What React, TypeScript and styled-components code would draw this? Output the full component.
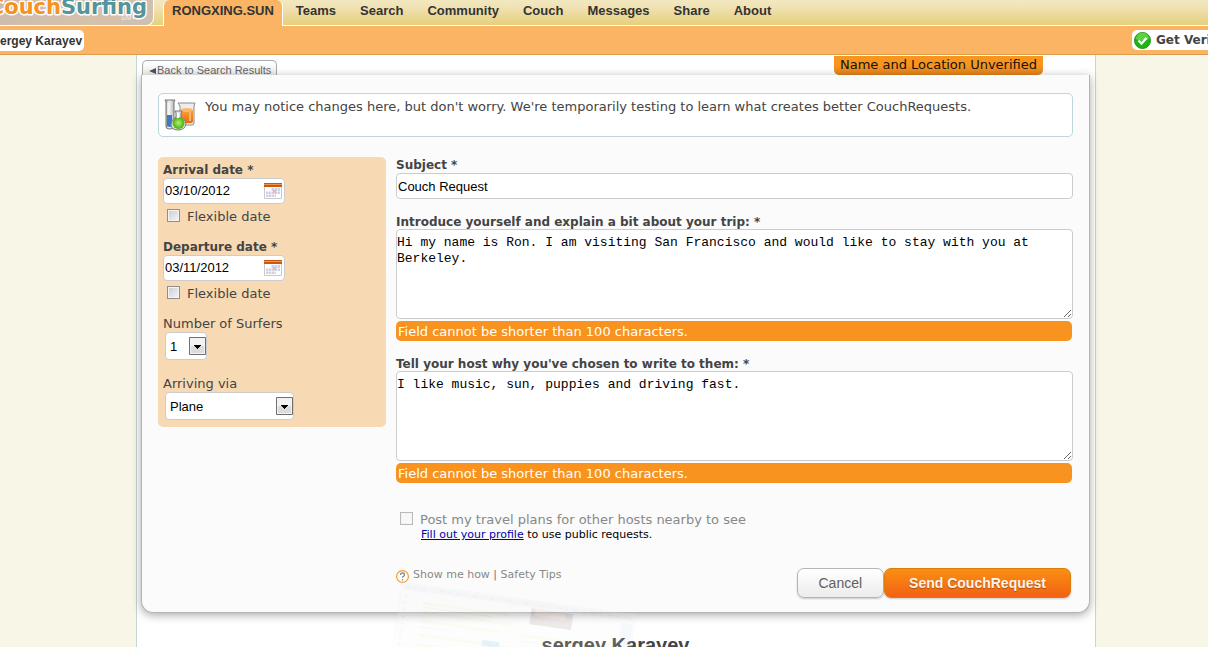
import React from "react";
import styled, { createGlobalStyle, css } from "styled-components";

const verdana = `"DejaVu Sans", Verdana, sans-serif`;
const arial = `"Liberation Sans", Arial, sans-serif`;
const mono = `"Liberation Mono", "Courier New", monospace`;

const GlobalStyle = createGlobalStyle`
  *, *::before, *::after { box-sizing: border-box; }
  body {
    margin: 0;
    background: #f8f6e6;
    color: #444;
    font: 13px/16px ${verdana};
  }
`;

const Page = styled.div`
  display: flex;
  flex-direction: column;
  min-height: 100vh;
  overflow: hidden;
`;

const Header = styled.header`
  display: flex;
  height: 26px;
  background: linear-gradient(#f2e8c0, #f0e2b2 30%, #e6cf7c);
  border-bottom: 1px solid #fff;
`;

const LogoLink = styled.a`
  display: block;
  width: 154px;
  height: 26px;
  margin-right: 9px;
  border: 1px solid #fff;
  border-width: 0 1px 1px 0;
  border-bottom-right-radius: 8px;
  background: linear-gradient(100deg, #cdbcae, #d6c1aa 60%, #cfbfb2);

  svg { display: block; }
`;

const Nav = styled.nav`
  display: flex;
`;

const NavLink = styled.a<{ $active?: boolean }>`
  padding: 3px 12px 0;
  color: #333;
  font: bold 13px/16px ${arial};
  text-decoration: none;
  white-space: nowrap;
  ${(p) =>
    p.$active &&
    css`
      height: 26px;
      margin-right: 1px;
      padding: 3px 8px 0;
      border: 1px solid #fff;
      border-width: 0 1px;
      border-radius: 6px 6px 0 0;
      background: #fab463;
    `}
`;

const SubBar = styled.div`
  display: flex;
  justify-content: space-between;
  height: 29px;
  padding-top: 4px;
  background: #fab463;
  border-bottom: 1px solid #dd9d50;
`;

const PersonChip = styled.a`
  height: 21px;
  padding: 0 2px 0 0;
  border-radius: 0 5px 5px 0;
  background: #fff;
  color: #333;
  font: bold 12px/22px ${arial};
  text-decoration: none;
`;

const VerifyChip = styled.a`
  display: flex;
  align-items: center;
  gap: 5px;
  width: 76px;
  height: 20px;
  padding-left: 2px;
  overflow: hidden;
  border-radius: 5px 0 0 5px;
  background: #fff;
  color: #444;
  font: bold 12px/20px ${verdana};
  text-decoration: none;
  white-space: nowrap;

  svg { flex: none; }
`;

const Body = styled.div`
  display: flex;
  flex: 1;
  justify-content: center;
  padding-left: 24px;
`;

const Main = styled.main`
  flex: 0 1 960px;
  min-width: 0;
  padding: 0 5px 0 4px;
  border: 1px solid #c3d6d8;
  border-width: 0 1px;
  background: #fff;
`;

const TabRow = styled.div`
  display: flex;
  align-items: flex-start;
  justify-content: space-between;
  height: 20px;
  padding: 0 47px 0 1px;
`;

const BackLink = styled.a`
  height: 15px;
  margin-top: 5px;
  padding: 1px 5px 0 6px;
  border: 1px solid #aaa;
  border-bottom: 0;
  border-radius: 5px 5px 0 0;
  background: linear-gradient(#fff, #eee);
  color: #666;
  font: 11px/16px ${arial};
  text-decoration: none;
`;

const BackArrow = styled.svg`
  margin-right: 1px;
`;

const Unverified = styled.div`
  height: 19px;
  margin-top: 1px;
  padding: 0 6px;
  border-radius: 0 0 5px 5px;
  background: linear-gradient(#f8951f 50%, #e0811c);
  color: #111;
  font: 13px/17px ${verdana};
`;

const Panel = styled.form`
  position: relative;
  padding: 18px 16px 13px;
  border: 1px solid #b4b4b4;
  border-top: 0;
  border-radius: 0 0 12px 12px;
  background: #fbfbfb;
  box-shadow: 0 2px 10px rgba(0, 0, 0, 0.35);
`;

const Notice = styled.p`
  display: flex;
  gap: 9px;
  height: 44px;
  margin: 0 0 20px;
  padding: 5px;
  border: 1px solid #bdd6da;
  border-radius: 5px;
  background: #fff;

  svg { flex: none; }
`;

const Columns = styled.div`
  display: flex;
  gap: 10px;
`;

const Side = styled.div`
  flex: 0 0 228px;
  align-self: flex-start;
  padding: 4px 5px 7px;
  border-radius: 5px;
  background: #f7dab3;
`;

const SideLabel = styled.label<{ $bold?: boolean }>`
  display: block;
  height: 17px;
  font-weight: ${(p) => (p.$bold ? "bold" : "normal")};
  font-size: ${(p) => (p.$bold ? 12 : 13)}px;
  line-height: 18px;
`;

const boxed = css`
  border: 1px solid #ccc;
  border-radius: 4px;
  background: #fff;
  color: #000;
`;

const DateField = styled.div`
  ${boxed}
  display: flex;
  align-items: center;
  justify-content: space-between;
  width: 122px;
  height: 26px;
  padding-right: 2px;
`;

const DateInput = styled.input`
  width: 90px;
  padding: 0 1px;
  border: 0;
  outline: 0;
  background: none;
  color: #000;
  font: 13px/16px ${arial};
`;

const IconButton = styled.button`
  display: flex;
  padding: 0;
  border: 0;
  background: none;
`;

const CheckRow = styled.div`
  display: flex;
  align-items: center;
  gap: 7px;
  height: 26px;
  margin-bottom: 8px;
  padding-left: 4px;
  line-height: 18px;
`;

const Checkbox = styled.input.attrs({ type: "checkbox" })`
  flex: none;
  appearance: none;
  width: 13px;
  height: 13px;
  margin: 0 0 3px;
  border: 1px solid #8e8f8f;
  background: linear-gradient(135deg, #c8cdd3, #f6f6f6);
  box-shadow: inset 0 0 0 1px #f4f4f4;

  &:checked { background: #4b6a94; }
  &:disabled { border-color: #b9b9b9; background: #f8f8f8; }
`;

const SelectBox = styled.div<{ $width: number }>`
  ${boxed}
  position: relative;
  width: ${(p) => p.$width}px;
  height: 28px;
  margin: 0 0 15px 2px;

  &:last-child { margin-bottom: 0; }

  svg {
    position: absolute;
    top: 4px;
    right: 0;
    pointer-events: none;
  }
`;

const Select = styled.select`
  appearance: none;
  width: 100%;
  height: 100%;
  padding: 1px 20px 0 4px;
  border: 0;
  background: none;
  color: #000;
  font: 13px/16px ${arial};
`;

const Fields = styled.div`
  flex: 1;
  min-width: 0;
`;

const FieldLabel = styled.label`
  display: block;
  height: 15px;
  font-weight: bold;
  font-size: 12px;
  line-height: 16px;
`;

const TextInput = styled.input`
  ${boxed}
  display: block;
  width: 100%;
  height: 26px;
  margin: 1px 0 15px;
  padding: 0 1px;
  font: 13px/16px ${arial};
`;

const TextArea = styled.textarea`
  ${boxed}
  display: block;
  width: 100%;
  height: 90px;
  margin-bottom: 2px;
  padding: 5px 0;
  font: 13px/16px ${mono};
  resize: vertical;
`;

const FieldError = styled.p`
  height: 20px;
  margin: 0 1px 15px 0;
  padding: 0 2px;
  border-radius: 5px;
  background: #f7931e;
  color: #fff;
  line-height: 22px;
`;

const PostRow = styled.div`
  display: flex;
  align-items: center;
  gap: 7px;
  height: 16px;
  margin-top: 29px;
  padding-left: 4px;
  color: #888;
  line-height: 18px;
`;

const ProfileHint = styled.p`
  margin: 0 0 26px;
  padding-left: 25px;
  color: #000;
  font-size: 11px;
  line-height: 14px;

  a { color: #00a; }
`;

const Footer = styled.div`
  display: flex;
  align-items: flex-start;
  justify-content: space-between;
  padding: 0 2px 1px 0;
`;

const HelpLinks = styled.div`
  display: flex;
  align-items: flex-start;
  gap: 4px;
  color: #777;
  font-size: 11px;
  line-height: 13px;

  svg { margin-top: 2px; }
  a { color: #888; text-decoration: none; }
`;

const Buttons = styled.div`
  display: flex;
`;

const Button = styled.button<{ $primary?: boolean }>`
  height: 30px;
  padding: 0 21px;
  border: 1px solid #b5b5b5;
  border-radius: 7px;
  background: linear-gradient(#fff, #ececec);
  box-shadow: 0 1px 2px rgba(0, 0, 0, 0.2);
  color: #606060;
  font: 14px/16px ${arial};
  ${(p) =>
    p.$primary &&
    css`
      padding: 0 24px;
      border-color: #da7c0c;
      background: linear-gradient(#fb8f12, #f26114);
      color: #fef4e9;
      font-weight: bold;
      text-shadow: 0 1px 1px rgba(0, 0, 0, 0.3);
    `}
`;

const Ghost = styled.svg`
  position: absolute;
  top: 505px;
  left: 244px;
  opacity: 0.16;
  pointer-events: none;
`;

const ProfileName = styled.h1`
  margin: 20px 0 0;
  color: #444;
  font: bold 20px/24px ${arial};
  text-align: center;
`;

const Logo = () => (
  <svg width="153" height="25" role="img" aria-label="CouchSurfing">
    <text x="121" y="20" fontFamily="Liberation Sans, sans-serif" fontSize="7" fill="#f3ece4">SM</text>
    <g
      fontFamily="DejaVu Sans, sans-serif"
      fontWeight="bold"
      fontSize="21"
      stroke="#fff"
      strokeWidth="3"
      strokeLinejoin="round"
      paintOrder="stroke"
    >
      <text x="61" y="14" textAnchor="end" fill="#f7921e">Couch</text>
      <text x="61" y="14" fill="#56949b">Surfing</text>
    </g>
  </svg>
);

const VerifiedIcon = () => (
  <svg width="17" height="17" viewBox="0 0 17 17" aria-hidden="true">
    <circle cx="8.500" cy="8.500" r="8" fill="#22b216" stroke="#159a12" />
    <path d="M2 7a6.500 6.500 0 0 1 13 0c-4 2-9 2-13 0z" fill="#5ed044" />
    <path d="M4.500 8.500l3 3 5-5.500" fill="none" stroke="#fff" strokeWidth="2.400" />
  </svg>
);

const BeakersIcon = () => (
  <svg width="32" height="34" viewBox="0 0 32 34" aria-hidden="true">
    <defs>
      <linearGradient id="glass">
        <stop offset="0" stopColor="#8f8f8f" />
        <stop offset="0.4" stopColor="#f7f7f7" />
        <stop offset="1" stopColor="#a9a9a9" />
      </linearGradient>
      <linearGradient id="orange" x2="0" y2="1">
        <stop offset="0" stopColor="#f9a33c" />
        <stop offset="1" stopColor="#e8690c" />
      </linearGradient>
      <radialGradient id="green">
        <stop offset="0" stopColor="#b4f36d" />
        <stop offset="1" stopColor="#45ae14" />
      </radialGradient>
    </defs>
    <path d="M14 4h17l-1 3v17q0 2-2 2H18q-2 0-2-2V7z" fill="#ededed" stroke="#8b8b8b" />
    <path d="M17 11h12v11q0 2-2 2h-8q-2 0-2-2z" fill="url(#orange)" />
    <ellipse cx="23" cy="11" rx="6" ry="2" fill="#fbb866" />
    <path d="M26 13v9" stroke="#f8b271" strokeWidth="2" />
    <path d="M1 1h10l-1 2v25q0 2-4 2t-4-2V3z" fill="url(#glass)" stroke="#777" />
    <path d="M3 16h5v11q-2 2-5 0z" fill="#3c78c4" />
    <path d="M4 4v12" stroke="#fff" />
    <path d="M11 12h7l-1 2v4q5 3 5 7-1 6-8 6t-7-6q0-4 5-7v-4z" fill="#e4e4e4" stroke="#777" />
    <circle cx="14.500" cy="24" r="6" fill="url(#green)" />
    <path d="M14 14v5" stroke="#fff" strokeWidth="2" />
  </svg>
);

const CalendarIcon = () => (
  <svg width="18" height="18" viewBox="0 0 18 18" aria-hidden="true">
    <path d="M.5 4.500h17v12H.5z" fill="#fff" stroke="#c9c9c9" />
    <path d="M0 1h18v4H0z" fill="#c9590f" />
    <path d="M0 2h18v1H0z" fill="#ec9355" />
    <path d="M7 6h9v6H7zM2 9h10v6H2z" fill="#cdd3e6" />
    <path d="M2 9.500h14M2 12.500h11M4.500 8v7M7.500 6v9M10.500 6v9M13.500 6v7" stroke="#fff" strokeWidth="0.500" />
    <path d="M9 8h3v3H9z" fill="#f4b7a0" />
  </svg>
);

const SelectArrow = () => (
  <svg width="17" height="18" viewBox="0 0 17 18" aria-hidden="true">
    <path d="M.5.5h16v17H.5z" fill="#f3f3f3" stroke="#6f6f6f" />
    <path d="M2 9h13v7H2z" fill="#dcdcdc" />
    <path d="M5 8h7v1h-1v1h-1v1H9v1H8v-1H7v-1H6V9H5z" fill="#000" />
  </svg>
);

const HelpIcon = () => (
  <svg width="13" height="13" viewBox="0 0 13 13" aria-hidden="true">
    <circle cx="6.500" cy="6.500" r="5.900" fill="#fff" stroke="#f39a2d" strokeWidth="1.200" />
    <path d="M4.500 5q0-2 2-2t2 1.800q0 1-1 1.500t-1 1.400M6.500 9v1.400" fill="none" stroke="#8a8a8a" strokeWidth="1.300" />
  </svg>
);

const GhostPreview = () => (
  <Ghost width="260" height="75" viewBox="0 0 260 75" aria-hidden="true">
    <g transform="translate(16 2) rotate(8)">
      <path d="M0 0h236v90H0z" fill="#f8f8f8" stroke="#dde3ee" />
      <path d="M2 4h232" stroke="#dde2ee" strokeWidth="6" />
      <path d="M4 4h226" stroke="#a9aec0" strokeDasharray="5 4 2 6" />
      <path d="M6 12v70" stroke="#cfcfd8" strokeWidth="3" strokeDasharray="2 5" />
      <path d="M24 18h86M24 27h92M24 36h80M24 50h96M24 60h90M124 36h90M124 48h84" stroke="#f2e9b4" strokeWidth="3" />
      <path d="M24 22h70M24 42h30M126 42h60M126 54h50" stroke="#bbb" strokeDasharray="2 1" />
      <path d="M132 8h42v16h-42z" fill="#a08080" />
      <path d="M136 8h30v7h-30z" fill="#e1b09a" />
      <path d="M88 46h17v6H88z" fill="#58b8dc" />
      <path d="M223 10h11v74h-11z" fill="#cdd7ee" />
    </g>
  </Ghost>
);

const navItems = ["Teams", "Search", "Community", "Couch", "Messages", "Share", "About"];

const DateGroup = ({ id, label, value }: { id: string; label: string; value: string }) => (
  <>
    <SideLabel $bold htmlFor={id}>{label} *</SideLabel>
    <DateField>
      <DateInput id={id} type="text" defaultValue={value} />
      <IconButton type="button" aria-label={`Choose ${label.toLowerCase()}`}>
        <CalendarIcon />
      </IconButton>
    </DateField>
    <CheckRow>
      <Checkbox id={`${id}-flexible`} />
      <label htmlFor={`${id}-flexible`}>Flexible date</label>
    </CheckRow>
  </>
);

const MessageField = ({ id, label, value }: { id: string; label: string; value: string }) => (
  <>
    <FieldLabel htmlFor={id}>{label} *</FieldLabel>
    <TextArea id={id} defaultValue={value} spellCheck={false} />
    <FieldError>Field cannot be shorter than 100 characters.</FieldError>
  </>
);

export default function App() {
  return (
    <Page>
      <GlobalStyle />
      <Header>
        <LogoLink href="#home"><Logo /></LogoLink>
        <Nav>
          <NavLink $active href="#me">RONGXING.SUN</NavLink>
          {navItems.map((item) => (
            <NavLink key={item} href={`#${item.toLowerCase()}`}>{item}</NavLink>
          ))}
        </Nav>
      </Header>
      <SubBar>
        <PersonChip href="#profile">ergey Karayev</PersonChip>
        <VerifyChip href="#verify"><VerifiedIcon />Get Verified</VerifyChip>
      </SubBar>
      <Body>
        <Main>
          <TabRow>
            <BackLink href="#results">
              <BackArrow width="7" height="6" aria-hidden="true">
                <path d="M7 0v6L0 3z" fill="#555" />
              </BackArrow>
              Back to Search Results
            </BackLink>
            <Unverified>Name and Location Unverified</Unverified>
          </TabRow>
          <Panel onSubmit={(e) => e.preventDefault()}>
            <Notice>
              <BeakersIcon />
              You may notice changes here, but don't worry. We're temporarily testing to learn what creates better CouchRequests.
            </Notice>
            <Columns>
              <Side>
                <DateGroup id="arrival" label="Arrival date" value="03/10/2012" />
                <DateGroup id="departure" label="Departure date" value="03/11/2012" />
                <SideLabel htmlFor="surfers">Number of Surfers</SideLabel>
                <SelectBox $width={42}>
                  <Select id="surfers"><option>1</option><option>2</option><option>3</option></Select>
                  <SelectArrow />
                </SelectBox>
                <SideLabel htmlFor="via">Arriving via</SideLabel>
                <SelectBox $width={129}>
                  <Select id="via"><option>Plane</option><option>Train</option><option>Car</option></Select>
                  <SelectArrow />
                </SelectBox>
              </Side>
              <Fields>
                <FieldLabel htmlFor="subject">Subject *</FieldLabel>
                <TextInput id="subject" type="text" defaultValue="Couch Request" />
                <MessageField
                  id="intro"
                  label="Introduce yourself and explain a bit about your trip:"
                  value="Hi my name is Ron. I am visiting San Francisco and would like to stay with you at Berkeley."
                />
                <MessageField
                  id="why"
                  label="Tell your host why you've chosen to write to them:"
                  value="I like music, sun, puppies and driving fast."
                />
                <PostRow>
                  <Checkbox id="post" disabled />
                  <label htmlFor="post">Post my travel plans for other hosts nearby to see</label>
                </PostRow>
                <ProfileHint>
                  <a href="#fill">Fill out your profile</a> to use public requests.
                </ProfileHint>
                <Footer>
                  <HelpLinks>
                    <HelpIcon />
                    <span>
                      <a href="#how">Show me how</a> | <a href="#safety">Safety Tips</a>
                    </span>
                  </HelpLinks>
                  <Buttons>
                    <Button type="button">Cancel</Button>
                    <Button type="submit" $primary>Send CouchRequest</Button>
                  </Buttons>
                </Footer>
              </Fields>
            </Columns>
            <GhostPreview />
          </Panel>
          <ProfileName>sergey Karayev</ProfileName>
        </Main>
      </Body>
    </Page>
  );
}
